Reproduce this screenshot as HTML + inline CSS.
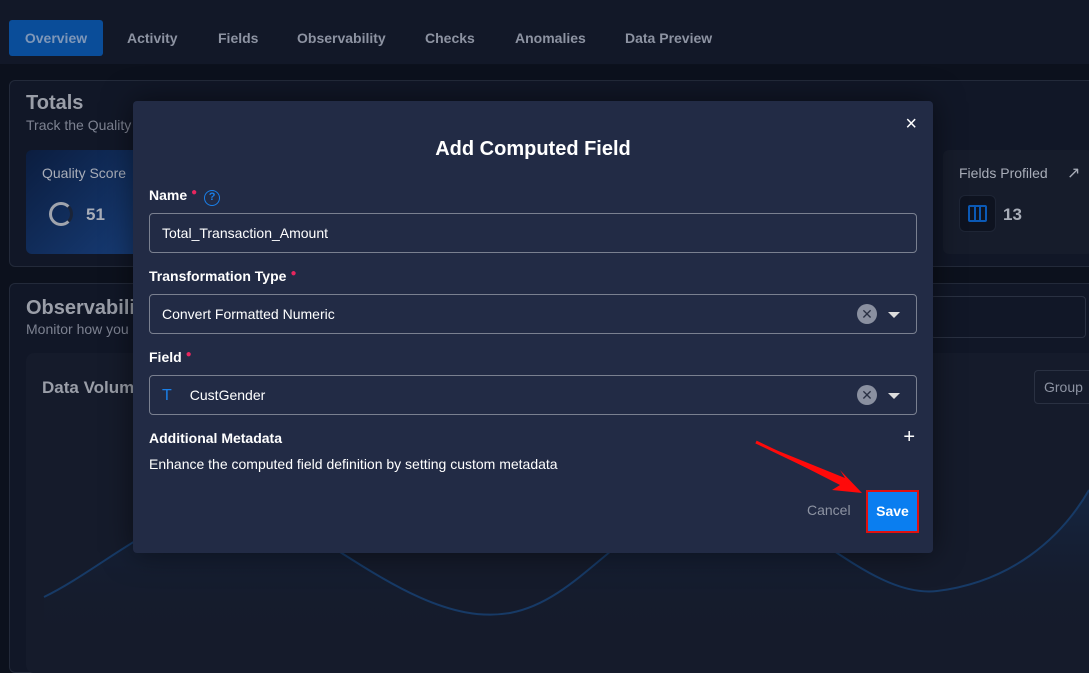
<!DOCTYPE html>
<html><head><meta charset="utf-8"><style>
*{box-sizing:border-box;margin:0;padding:0}
body{width:1089px;height:659px;overflow:hidden;background:#0c111d;font-family:"Liberation Sans",sans-serif;position:relative;color:#e6e8ee}
.top{position:absolute;left:0;top:0;width:1089px;height:64px;background:#121828}
.tab{position:absolute;top:20px;height:36px;line-height:37px;font-size:14px;font-weight:bold;color:#8d93a2}
.ov{left:9px;width:94px;background:#0a4d99;border-radius:3px;text-align:center;color:#7f97b8}
.panel{position:absolute;border:1px solid #232a3a;border-radius:6px;background:#111727}
.dim{color:#7d8291}
.modal{position:absolute;left:133px;top:101px;width:800px;height:452px;background:#222b45;border-radius:4px;box-shadow:0 0 30px rgba(0,0,0,.5)}
.lbl{position:absolute;left:16px;font-size:14px;font-weight:bold;color:#fff}
.req{color:#e8265e;font-size:10px;vertical-align:top;margin-left:4px}
.inp{position:absolute;left:16px;width:768px;height:40px;border:1px solid #7a8090;border-radius:4px;font-size:14px;color:#fff;line-height:38px;padding-left:12px}
.clr{position:absolute;right:39px;top:9px;width:20px;height:20px;border-radius:50%;background:#8a90a0;color:#2a3144;font-size:14px;line-height:20px;text-align:center}
.car{position:absolute;right:16px;top:17px;width:0;height:0;border-left:6px solid transparent;border-right:6px solid transparent;border-top:6px solid #ddd}
</style></head><body>
<div class="top"></div>
<div class="tab ov">Overview</div>
<div class="tab" style="left:127px">Activity</div>
<div class="tab" style="left:218px">Fields</div>
<div class="tab" style="left:297px">Observability</div>
<div class="tab" style="left:425px">Checks</div>
<div class="tab" style="left:515px">Anomalies</div>
<div class="tab" style="left:625px">Data Preview</div>

<div class="panel" style="left:9px;top:80px;width:1090px;height:187px"></div>
<div style="position:absolute;left:26px;top:92px;font-size:20px;font-weight:bold;color:#9a9ea8">Totals</div>
<div class="dim" style="position:absolute;left:26px;top:117px;font-size:14px">Track the Quality</div>
<div style="position:absolute;left:26px;top:150px;width:120px;height:104px;border-radius:6px;background:linear-gradient(135deg,#0b1d3f,#173d78)"></div>
<div style="position:absolute;left:42px;top:165px;font-size:14px;color:#a8adb8">Quality Score</div>
<div style="position:absolute;left:49px;top:202px;width:24px;height:24px;border-radius:50%;border:3px solid #a0a4ad;border-right-color:#1a2438"></div>
<div style="position:absolute;left:86px;top:205px;font-size:17px;font-weight:bold;color:#a8adb8">51</div>
<div style="position:absolute;left:943px;top:150px;width:150px;height:104px;border-radius:6px;background:#161c2b"></div>
<div style="position:absolute;left:959px;top:165px;font-size:14px;color:#a8adb8">Fields Profiled</div>
<div style="position:absolute;left:1067px;top:163px;font-size:16px;color:#a8adb8">↗</div>
<div style="position:absolute;left:959px;top:195px;width:37px;height:37px;border-radius:6px;background:#0e1320;border:1px solid #1e2535"></div>
<div style="position:absolute;left:968px;top:205px;width:19px;height:17px;border:2px solid #0b59b5;border-radius:2px;background:linear-gradient(90deg,transparent 4px,#0b59b5 4px,#0b59b5 6px,transparent 6px,transparent 9px,#0b59b5 9px,#0b59b5 11px,transparent 11px)"></div>
<div style="position:absolute;left:1003px;top:205px;font-size:17px;font-weight:bold;color:#a8adb8">13</div>

<div class="panel" style="left:9px;top:283px;width:1090px;height:390px"></div>
<div style="position:absolute;left:26px;top:297px;font-size:20px;font-weight:bold;color:#9a9ea8">Observabili</div>
<div class="dim" style="position:absolute;left:26px;top:321px;font-size:14px">Monitor how you</div>
<div style="position:absolute;left:930px;top:296px;width:156px;height:42px;border:1px solid #2a3142;border-radius:4px"></div>
<div style="position:absolute;left:26px;top:353px;width:1080px;height:320px;border-radius:8px;background:#151b2b"></div>
<div style="position:absolute;left:42px;top:378px;font-size:17px;font-weight:bold;color:#9a9ea8">Data Volum</div>
<div style="position:absolute;left:1034px;top:370px;width:60px;height:34px;border:1px solid #2a3142;border-radius:4px;font-size:14px;color:#8d93a2;padding:8px 9px">Group</div>
<svg style="position:absolute;left:0;top:0" width="1089" height="659"><defs><linearGradient id="g" x1="0" y1="0" x2="0" y2="1"><stop offset="0" stop-color="#15315a" stop-opacity=".5"/><stop offset="1" stop-color="#151b2b" stop-opacity="0"/></linearGradient></defs>
<path d="M44 597 C120 560 200 470 290 520 C370 570 440 625 510 613 C580 600 620 520 700 500 C780 480 860 600 937 591 C1010 582 1060 540 1089 490 L1089 640 L44 640Z" fill="url(#g)"/>
<path d="M44 597 C120 560 200 470 290 520 C370 570 440 625 510 613 C580 600 620 520 700 500 C780 480 860 600 937 591 C1010 582 1060 540 1089 490" fill="none" stroke="#173a66" stroke-width="2"/></svg>

<div class="modal">
<div style="position:absolute;right:16px;top:12px;font-size:20px;color:#fff">×</div>
<div style="position:absolute;left:0;width:800px;top:37px;text-align:center;font-size:20px;font-weight:bold;color:#fff">Add Computed Field</div>
<div class="lbl" style="top:86px">Name<span class="req">●</span> <span style="display:inline-block;width:16px;height:16px;border:1.5px solid #1a7fe8;border-radius:50%;color:#1a7fe8;font-size:11px;text-align:center;line-height:13px;margin-left:3px">?</span></div>
<div class="inp" style="top:112px">Total_Transaction_Amount</div>
<div class="lbl" style="top:167px">Transformation Type<span class="req">●</span></div>
<div class="inp" style="top:193px">Convert Formatted Numeric<div class="clr">✕</div><div class="car"></div></div>
<div class="lbl" style="top:248px">Field<span class="req">●</span></div>
<div class="inp" style="top:274px"><span style="color:#1a7fe8;font-size:16px;margin-right:18px">T</span>CustGender<div class="clr">✕</div><div class="car"></div></div>
<div class="lbl" style="top:329px">Additional Metadata</div>
<div style="position:absolute;right:18px;top:325px;font-size:20px;color:#fff">+</div>
<div style="position:absolute;left:16px;top:355px;font-size:14px;color:#fff">Enhance the computed field definition by setting custom metadata</div>
<div style="position:absolute;left:674px;top:401px;font-size:14px;color:#8d93a2">Cancel</div>
<div style="position:absolute;left:733px;top:389px;width:53px;height:43px;border:2px solid #e01010;background:#0a7ef0;color:#fff;font-size:14px;font-weight:bold;text-align:center;line-height:39px">Save</div>
</div>
<svg style="position:absolute;left:0;top:0" width="1089" height="659"><path d="M756 442 L845 478 L840 470 L862 493 L832 490 L840 485 Z" fill="#ff0a0a"/><line x1="756" y1="442" x2="850" y2="487" stroke="#ff0a0a" stroke-width="3"/></svg>
</body></html>
